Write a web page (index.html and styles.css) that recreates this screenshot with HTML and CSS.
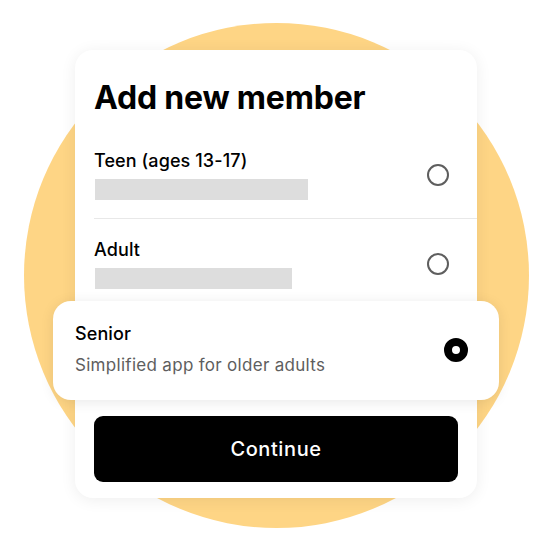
FILE: index.html
```html
<!DOCTYPE html>
<html lang="en">
<head>
<meta charset="utf-8">
<title>Add new member</title>
<link rel="stylesheet" href="styles.css">
</head>
<body>
<div class="stage">
  <div class="blob"></div>
  <div class="card">
    <h1 class="title">Add new member</h1>
    <div class="options">
      <div class="row row-first">
        <div class="row-text">
          <div class="label">Teen (ages 13-17)</div>
          <div class="bar bar-teen"></div>
        </div>
        <span class="radio"></span>
      </div>
      <div class="row row-second">
        <div class="row-text">
          <div class="label">Adult</div>
          <div class="bar bar-adult"></div>
        </div>
        <span class="radio"></span>
      </div>
    </div>
    <div class="senior">
      <div class="row-text">
        <div class="label">Senior</div>
        <div class="sub">Simplified app for older adults</div>
      </div>
      <span class="radio radio-on"></span>
    </div>
    <button class="cta" type="button">Continue</button>
  </div>
</div>
</body>
</html>
```
FILE: styles.css
```css
* { box-sizing: border-box; }
html, body { margin: 0; padding: 0; background: #fff; }
body { font-family: Inter, "Noto Sans", sans-serif; color: #000; }

.stage {
  position: relative;
  width: 552px;
  height: 552px;
  overflow: hidden;
  padding: 50px 0 0 75px;
}

.blob {
  position: absolute;
  left: 24px;
  top: 23px;
  width: 505px;
  height: 505px;
  border-radius: 50%;
  background: #fed585;
}

.card {
  position: relative;
  width: 402px;
  background: #fff;
  border-radius: 18px;
  box-shadow: 0 2px 16px rgba(0,0,0,0.07);
  padding: 30px 19px 16px 19px;
  display: flex;
  flex-direction: column;
}

.title {
  margin: 0;
  font-size: 32px;
  line-height: 36px;
  font-weight: 700;
  letter-spacing: -0.2px;
}

.options {
  margin: 14px -19px 0 0;
  display: flex;
  flex-direction: column;
}

.row {
  display: flex;
  align-items: center;
  justify-content: space-between;
  padding: 19px 28px 19px 0;
}
.row-first { border-bottom: 1px solid #e8e8e8; padding-bottom: 18px; }
.row-second { padding-bottom: 12px; }

.row-text { display: flex; flex-direction: column; }

.label {
  font-size: 18px;
  line-height: 24px;
  font-weight: 500;
  letter-spacing: 0.1px;
}

.bar {
  margin-top: 6px;
  height: 21px;
  background: #dddddd;
}
.bar-teen { width: 213px; margin-left: 1px; }
.bar-adult { width: 197px; margin-left: 1px; }

.radio {
  width: 22px;
  height: 22px;
  border-radius: 50%;
  border: 2px solid #5e5e5e;
  flex: none;
}
.radio-on {
  width: 24px;
  height: 24px;
  border: 8px solid #000;
  background: #fff;
}

.senior {
  margin: 0 -41px;
  padding: 21px 31px 23px 22px;
  background: #fff;
  border-radius: 18px;
  box-shadow: 0 2px 14px rgba(0,0,0,0.09);
  display: flex;
  align-items: center;
  justify-content: space-between;
  position: relative;
}

.sub {
  margin-top: 7px;
  font-size: 17px;
  line-height: 24px;
  color: #5e5e5e;
  letter-spacing: 0.3px;
}

.cta {
  margin-top: 16px;
  height: 66px;
  width: 100%;
  border: 0;
  border-radius: 9px;
  background: #000;
  color: #fff;
  font-family: Inter, "Noto Sans", sans-serif;
  font-size: 20px;
  font-weight: 500;
  letter-spacing: 0.6px;
}
```
